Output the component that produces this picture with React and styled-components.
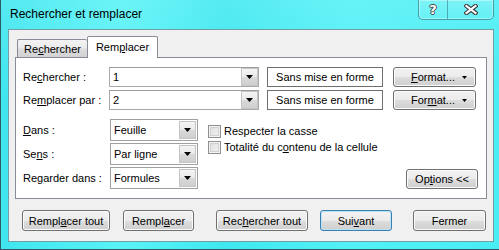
import React from 'react';
import styled, { createGlobalStyle, css } from 'styled-components';

const GlobalStyle = createGlobalStyle`
  html, body { margin: 0; padding: 0; background: #fff; }
  body {
    font-family: "Liberation Sans", Arial, sans-serif;
    font-size: 11px;
    color: #000;
  }
  u { text-underline-offset: 1px; }
`;

const Window = styled.div`
  width: 499px;
  height: 250px;
  box-sizing: border-box;
  display: flex;
  flex-direction: column;
  border-left: 1px solid #2d5b63;
  border-bottom: 1px solid #2d5b63;
  background:
    linear-gradient(180deg, rgba(255,255,255,0.12) 0%, rgba(255,255,255,0) 40%),
    linear-gradient(90deg, #3fe6ef 0%, #58f3f7 25%, #3fe8f0 45%, #52f1f6 70%, #48eef4 100%);
`;

const TitleBar = styled.div`
  height: 29px;
  display: flex;
  align-items: flex-start;
  flex-shrink: 0;
`;

const Title = styled.div`
  margin: 7px 0 0 9px;
  font-size: 12px;
  line-height: 14px;
  color: #000;
`;

const CaptionGroup = styled.div`
  margin-left: auto;
  margin-right: 5px;
  display: flex;
  height: 19px;
  border: 1px solid rgba(30, 90, 100, 0.55);
  border-top: none;
  border-radius: 0 0 5px 5px;
  overflow: hidden;
  box-shadow: inset 0 0 0 1px rgba(255,255,255,0.35);
  background: linear-gradient(180deg, rgba(255,255,255,0.18), rgba(255,255,255,0.05));
`;

const CaptionButton = styled.div`
  width: ${p => p.$w}px;
  display: flex;
  align-items: center;
  justify-content: center;
  & + & { border-left: 1px solid rgba(30, 90, 100, 0.45); }
`;

const HelpGlyph = styled.span`
  font-family: "DejaVu Sans", sans-serif;
  font-weight: bold;
  font-size: 13px;
  color: #fff;
  text-shadow: 1px 0 0 #444, -1px 0 0 #444, 0 1px 0 #444, 0 -1px 0 #444;
`;

const Client = styled.div`
  flex: 1;
  margin: 0 5px 7px 7px;
  background: #f0f0f0;
  border: 1px solid #6f9ea4;
  padding: 7px 6px 0 6px;
  display: flex;
  flex-direction: column;
`;

const TabBar = styled.div`
  display: flex;
  align-items: flex-end;
  height: 21px;
  padding-left: 2px;
  margin-bottom: -1px;
  position: relative;
  z-index: 1;
`;

const Tab = styled.div`
  box-sizing: border-box;
  border: 1px solid #898c95;
  border-bottom: none;
  border-radius: 2px 2px 0 0;
  display: flex;
  align-items: center;
  justify-content: center;
  ${p => p.$active ? css`
    width: 71px;
    height: 22px;
    background: #fff;
    padding-bottom: 1px;
  ` : css`
    width: 70px;
    height: 18px;
    margin-bottom: 1px;
    background: linear-gradient(180deg, #f3f3f3 0%, #ebebeb 45%, #dcdcdc 55%, #d2d2d2 100%);
    border-right: none;
    padding-top: 1px;
  `}
`;

const Panel = styled.div`
  background: #fff;
  border: 1px solid #898c95;
  padding: 9px 8px 9px 7px;
  display: flex;
  flex-direction: column;
`;

const FieldRow = styled.div`
  display: flex;
  align-items: center;
  height: 20px;
  & + & { margin-top: 3px; }
`;

const Label = styled.div`
  width: ${p => p.$w}px;
  flex-shrink: 0;
  white-space: nowrap;
`;

const Combo = styled.div`
  box-sizing: border-box;
  width: 150px;
  height: 20px;
  border: 1px solid #a7abb0;
  border-top-color: #9a9ea4;
  display: flex;
  background: #fff;
`;

const ComboText = styled.div`
  flex: 1;
  padding-left: 3px;
  display: flex;
  align-items: center;
`;

const DropButton = styled.div`
  box-sizing: border-box;
  width: 17px;
  border: 1px solid #c5c5c5;
  display: flex;
  align-items: center;
  justify-content: center;
  background: linear-gradient(180deg, #f4f4f4 0%, #e9e9e9 50%, #dadada 51%, #cfcfcf 100%);
`;

const FormatBox = styled.div`
  box-sizing: border-box;
  width: 116px;
  height: 20px;
  margin-left: 8px;
  border: 1px solid #6e6e6e;
  background: #fff;
  display: flex;
  align-items: center;
  justify-content: center;
`;

const Button = styled.div`
  box-sizing: border-box;
  width: ${p => p.$w}px;
  height: ${p => p.$h || 21}px;
  margin-left: ${p => p.$ml || 0}px;
  border: 1px solid ${p => p.$default ? '#3c7fb1' : '#707070'};
  border-radius: 3px;
  box-shadow: inset 0 0 0 1px ${p => p.$default ? '#b6e3f8' : '#fbfbfb'};
  background: linear-gradient(180deg, #f2f2f2 0%, #ebebeb 50%, #dddddd 51%, #cfcfcf 100%);
  display: flex;
  align-items: center;
  justify-content: center;
  white-space: nowrap;
  flex-shrink: 0;
`;

const MenuButton = styled(Button)`
  justify-content: flex-start;
  padding: 0 8px 0 17px;
  margin-left: 10px;
  & > svg { margin-left: auto; }
`;

const Options = styled.div`
  display: flex;
  margin-top: 9px;
`;

const SelectGrid = styled.div`
  display: grid;
  grid-template-columns: 87px 88px;
  grid-auto-rows: 22px;
  row-gap: 2px;
  align-items: center;
`;

const Select = styled.div`
  box-sizing: border-box;
  height: 22px;
  border: 1px solid #a0a0a0;
  background: #fff;
  display: flex;
  padding: 1px;
`;

const SelectText = styled.div`
  flex: 1;
  padding-left: 2px;
  display: flex;
  align-items: center;
`;

const Checks = styled.div`
  margin-left: 10px;
  padding-top: 3px;
  display: flex;
  flex-direction: column;
`;

const CheckRow = styled.div`
  display: flex;
  align-items: center;
  height: 18px;
  margin-top: -2px;
  white-space: nowrap;
  &:first-child { margin-top: 0; }
`;

const CheckBox = styled.span`
  box-sizing: border-box;
  width: 13px;
  height: 13px;
  margin-right: 3px;
  border: 1px solid #8f8f8f;
  background: linear-gradient(135deg, #dcdcdc 0%, #f4f4f4 100%);
  box-shadow: inset 0 0 0 1px #f4f4f4, inset 0 0 0 2px #cfcfcf;
`;

const OptionsButton = styled(Button)`
  margin-left: auto;
  align-self: flex-end;
`;

const Footer = styled.div`
  display: flex;
  margin-top: 11px;
  padding-left: 7px;
`;

function Arrow({ w = 7 }) {
  const h = Math.ceil(w / 2);
  return (
    <svg width={w} height={h} viewBox={`0 0 ${w} ${h}`}>
      <polygon points={`0,0 ${w},0 ${w / 2},${h}`} fill="#000" />
    </svg>
  );
}

function CaptionClose() {
  return (
    <svg width="14" height="11" viewBox="0 0 14 11">
      <path d="M2.5 2 L11.5 9 M11.5 2 L2.5 9" stroke="#3d3d3d" strokeWidth="4.4" strokeLinecap="square" />
      <path d="M2.5 2 L11.5 9 M11.5 2 L2.5 9" stroke="#fff" strokeWidth="2.2" strokeLinecap="square" />
    </svg>
  );
}

export default function App() {
  return (
    <>
      <GlobalStyle />
      <Window>
        <TitleBar>
          <Title>Rechercher et remplacer</Title>
          <CaptionGroup>
            <CaptionButton $w={28}><HelpGlyph>?</HelpGlyph></CaptionButton>
            <CaptionButton $w={45}><CaptionClose /></CaptionButton>
          </CaptionGroup>
        </TitleBar>
        <Client>
          <TabBar>
            <Tab>Re<u>c</u>hercher</Tab>
            <Tab $active>Rem<u>p</u>lacer</Tab>
          </TabBar>
          <Panel>
            <FieldRow>
              <Label $w={86}>Re<u>c</u>hercher :</Label>
              <Combo>
                <ComboText>1</ComboText>
                <DropButton><Arrow /></DropButton>
              </Combo>
              <FormatBox>Sans mise en forme</FormatBox>
              <MenuButton $w={83} $h={20}>
                <span><u>F</u>ormat...</span>
                <Arrow w={5} />
              </MenuButton>
            </FieldRow>
            <FieldRow>
              <Label $w={86}>Re<u>m</u>placer par :</Label>
              <Combo>
                <ComboText>2</ComboText>
                <DropButton><Arrow /></DropButton>
              </Combo>
              <FormatBox>Sans mise en forme</FormatBox>
              <MenuButton $w={83} $h={20}>
                <span>For<u>m</u>at...</span>
                <Arrow w={5} />
              </MenuButton>
            </FieldRow>
            <Options>
              <SelectGrid>
                <Label><u>D</u>ans :</Label>
                <Select>
                  <SelectText>Feuille</SelectText>
                  <DropButton><Arrow /></DropButton>
                </Select>
                <Label>Se<u>n</u>s :</Label>
                <Select>
                  <SelectText>Par ligne</SelectText>
                  <DropButton><Arrow /></DropButton>
                </Select>
                <Label>Re<u>g</u>arder dans :</Label>
                <Select>
                  <SelectText>Formules</SelectText>
                  <DropButton><Arrow /></DropButton>
                </Select>
              </SelectGrid>
              <Checks>
                <CheckRow><CheckBox />Respecter la casse</CheckRow>
                <CheckRow><CheckBox />Totalité du c<u>o</u>ntenu de la cellule</CheckRow>
              </Checks>
              <OptionsButton $w={72} $h={20}>Op<u>t</u>ions &lt;&lt;</OptionsButton>
            </Options>
          </Panel>
          <Footer>
            <Button $w={88}>Rempl<u>a</u>cer tout</Button>
            <Button $w={71} $ml={13}>Rempl<u>a</u>cer</Button>
            <Button $w={92} $ml={22}>Rec<u>h</u>ercher tout</Button>
            <Button $w={72} $ml={12} $default>Sui<u>v</u>ant</Button>
            <Button $w={73} $ml={21}>Fermer</Button>
          </Footer>
        </Client>
      </Window>
    </>
  );
}
